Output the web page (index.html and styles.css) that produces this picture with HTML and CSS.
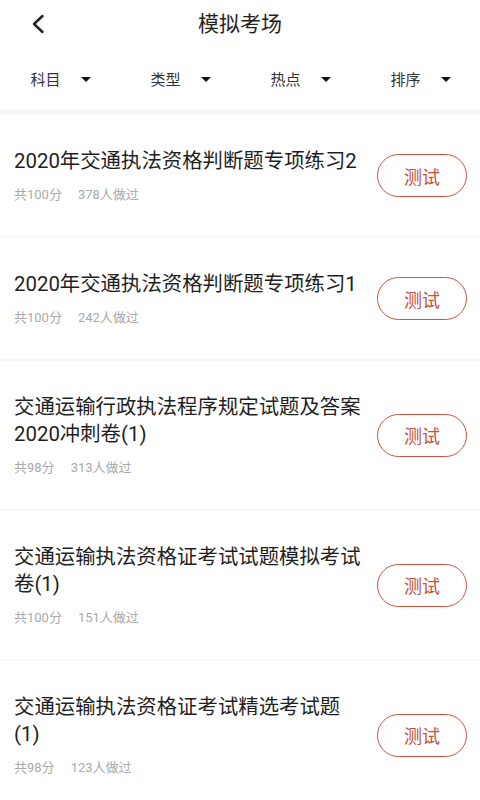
FILE: index.html
```html
<!DOCTYPE html>
<html lang="zh">
<head>
<meta charset="utf-8">
<link rel="stylesheet" href="styles.css">
</head>
<body>
<div class="page">
  <header class="topbar">
    <span class="back">
      <svg width="14" height="20" viewBox="0 0 14 20"><path d="M11.5 2 L3 10 L11.5 18" fill="none" stroke="#222" stroke-width="2.5" stroke-linecap="round" stroke-linejoin="round"/></svg>
    </span>
    <h1 class="title">模拟考场</h1>
  </header>
  <nav class="filters">
    <div class="filter"><span>科目</span><i class="tri"></i></div>
    <div class="filter"><span>类型</span><i class="tri"></i></div>
    <div class="filter"><span>热点</span><i class="tri"></i></div>
    <div class="filter"><span>排序</span><i class="tri"></i></div>
  </nav>
  <div class="list">
    <div class="card">
      <div class="info">
        <div class="name">2020年交通执法资格判断题专项练习2</div>
        <div class="meta"><span>共100分</span><span>378人做过</span></div>
      </div>
      <button class="btn">测试</button>
    </div>
    <div class="card">
      <div class="info">
        <div class="name">2020年交通执法资格判断题专项练习1</div>
        <div class="meta"><span>共100分</span><span>242人做过</span></div>
      </div>
      <button class="btn">测试</button>
    </div>
    <div class="card">
      <div class="info">
        <div class="name">交通运输行政执法程序规定试题及答案2020冲刺卷(1)</div>
        <div class="meta"><span>共98分</span><span>313人做过</span></div>
      </div>
      <button class="btn">测试</button>
    </div>
    <div class="card">
      <div class="info">
        <div class="name">交通运输执法资格证考试试题模拟考试卷(1)</div>
        <div class="meta"><span>共100分</span><span>151人做过</span></div>
      </div>
      <button class="btn">测试</button>
    </div>
    <div class="card">
      <div class="info">
        <div class="name">交通运输执法资格证考试精选考试题(1)</div>
        <div class="meta"><span>共98分</span><span>123人做过</span></div>
      </div>
      <button class="btn">测试</button>
    </div>
  </div>
</div>
</body>
</html>
```
FILE: styles.css
```css
* { box-sizing: border-box; }
html, body { margin: 0; padding: 0; background: #fff; }
body {
  font-family: Roboto, "Noto Sans CJK SC", sans-serif;
  color: #222;
}
.page { width: 480px; }
.topbar {
  height: 48px;
  display: flex;
  align-items: center;
  justify-content: center;
  position: relative;
}
.back {
  position: absolute;
  left: 31px;
  top: 14px;
  display: flex;
}
.title {
  margin: 0;
  font-size: 21px;
  font-weight: 400;
  color: #222;
  line-height: 28px;
}
.filters {
  height: 59px;
  padding-top: 2px;
  display: grid;
  grid-template-columns: repeat(4, 1fr);
  align-items: center;
  border-bottom: 6px solid #f7f7f7;
  box-sizing: content-box;
}
.filter {
  display: flex;
  align-items: center;
  justify-content: center;
  gap: 20px;
  font-size: 15px;
  line-height: 20px;
  color: #333;
  padding-left: 1px;
}
.tri {
  width: 0;
  height: 0;
  border-left: 5.5px solid transparent;
  border-right: 5.5px solid transparent;
  border-top: 5px solid #111;
}
.list {
  display: flex;
  flex-direction: column;
  gap: 2px;
  background: #f8f8f8;
}
.card {
  background: #fff;
  display: flex;
  align-items: center;
  padding: 33px 13px 33px 14px;
}
.info {
  width: 349px;
  flex: none;
}
.name {
  font-size: 20.4px;
  line-height: 27px;
  color: #1f1f1f;
}
.meta {
  margin-top: 12px;
  font-size: 13px;
  line-height: 16px;
  color: #aaa;
  display: flex;
  gap: 16px;
}
.btn {
  margin-left: auto;
  width: 90px;
  height: 43px;
  border: 1.5px solid #c8553f;
  border-radius: 22px;
  background: #fff;
  color: #c4513c;
  font-family: inherit;
  font-size: 18px;
  padding: 0;
}
```
